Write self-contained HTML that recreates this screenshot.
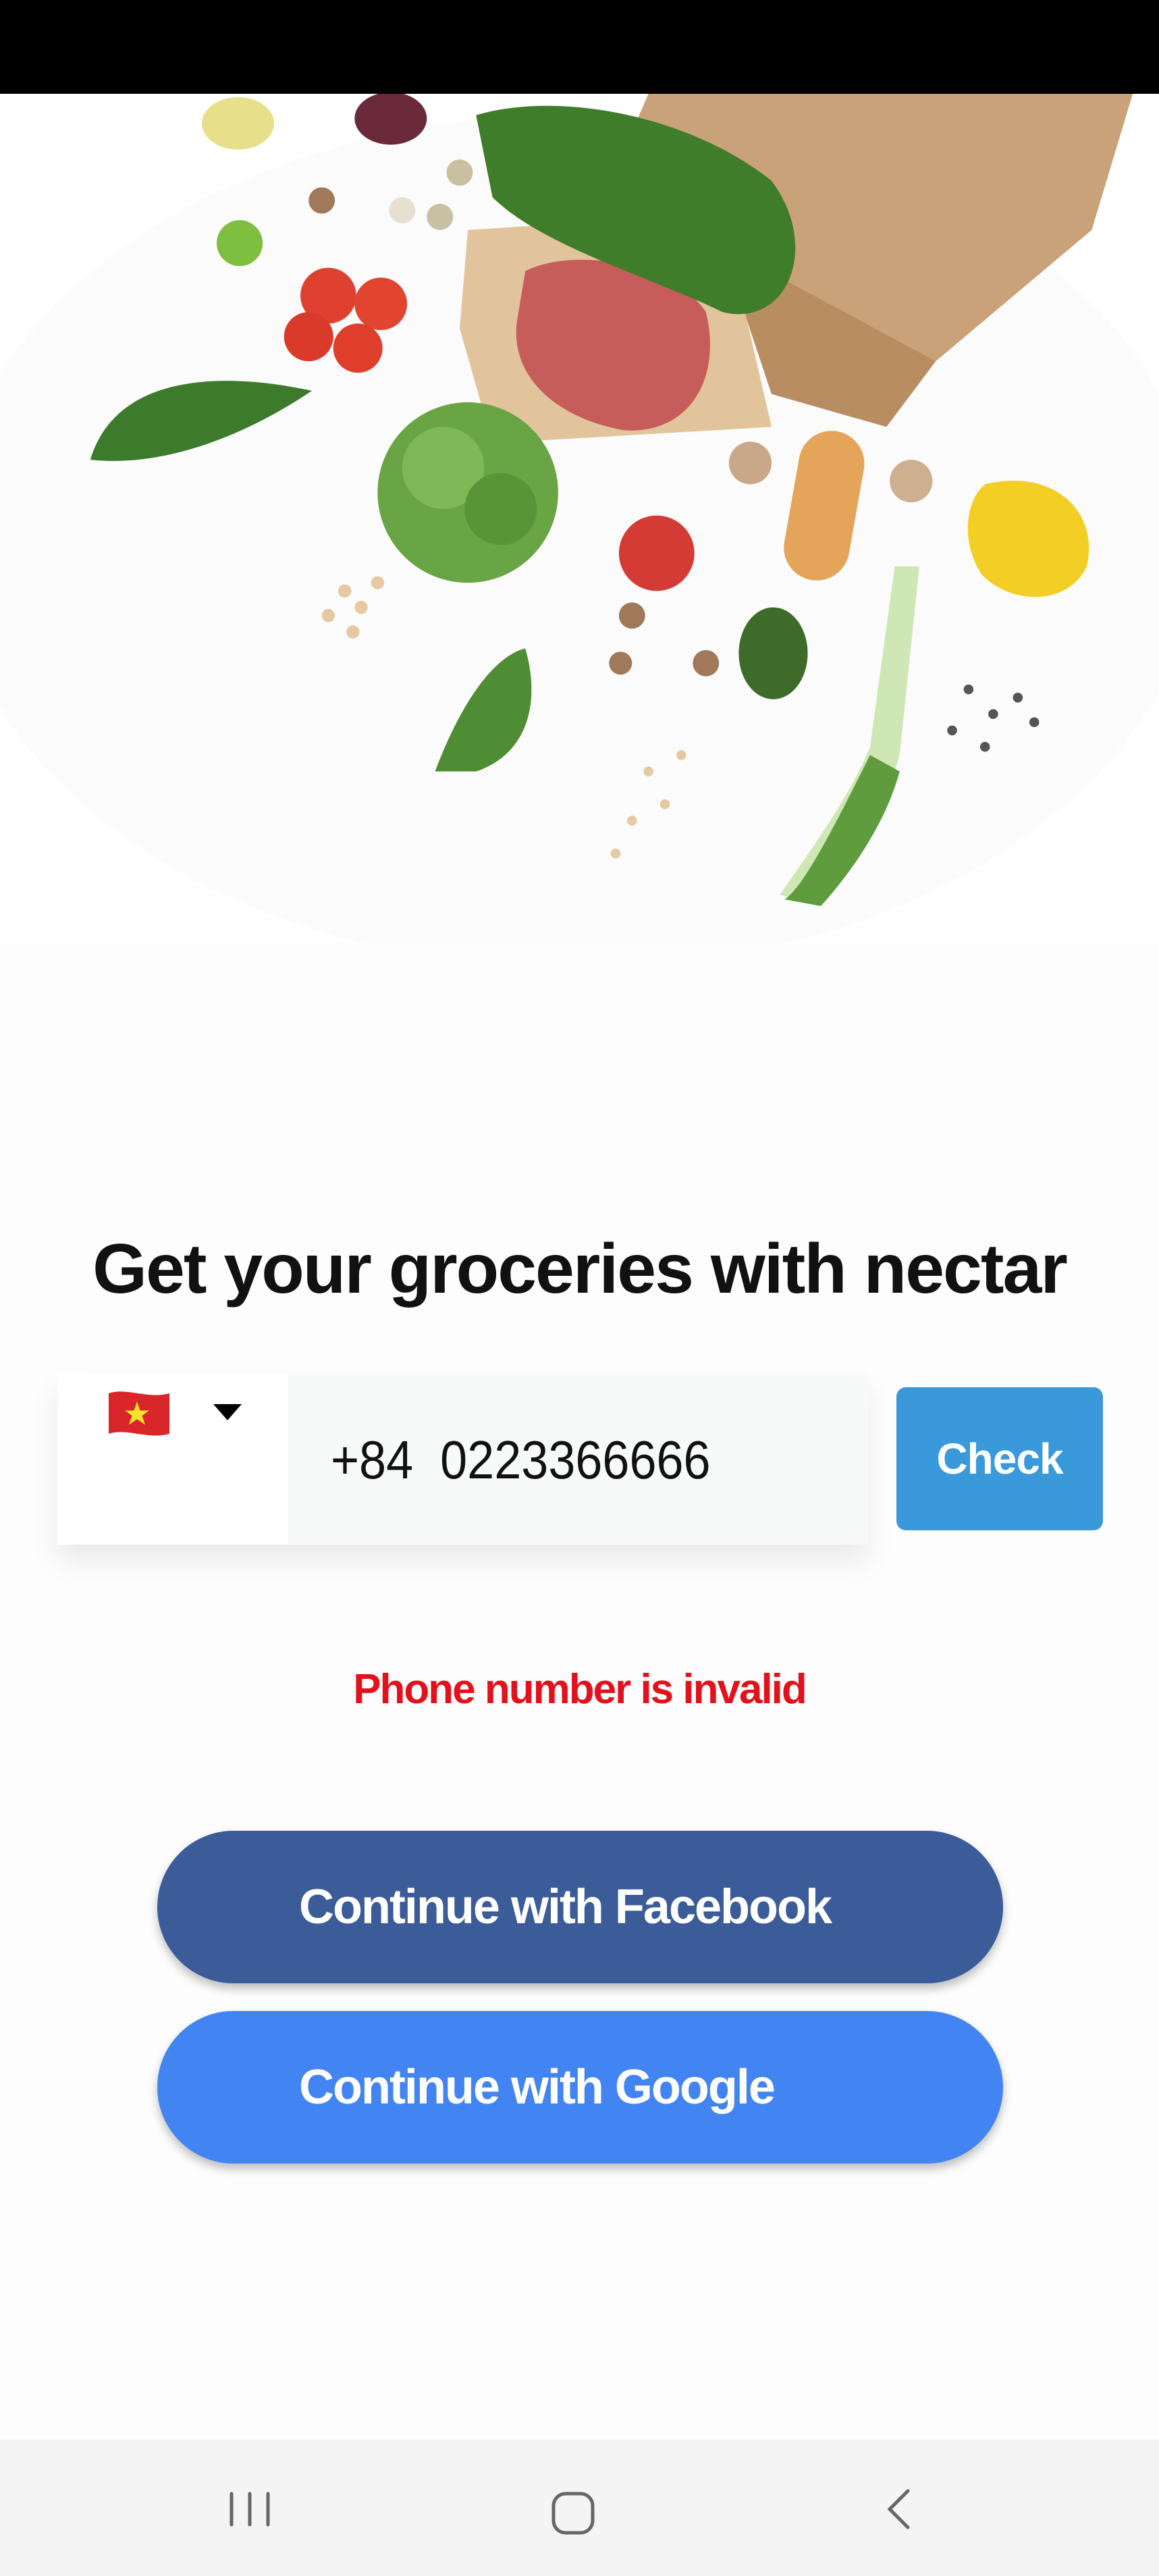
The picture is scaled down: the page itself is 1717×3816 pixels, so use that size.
<!DOCTYPE html>
<html><head><meta charset="utf-8"><style>
*{margin:0;padding:0;box-sizing:border-box}
body{width:1717px;height:3816px;position:relative;background:#fdfdfd;font-family:"Liberation Sans",sans-serif;overflow:hidden}
.abs{position:absolute}
</style></head><body>
<div class="abs" style="left:0;top:0;width:1717px;height:139px;background:#000"></div>
<svg class="abs" style="left:0;top:139px" width="1717" height="1259" viewBox="0 57 706 518" preserveAspectRatio="none">
<rect x="0" y="57" width="706" height="518" fill="#fff"/>
<ellipse cx="350" cy="330" rx="380" ry="260" fill="#fbfbfb"/>
<polygon points="395,57 690,57 665,140 570,220 470,180 385,80" fill="#c9a27a"/>
<polygon points="440,150 570,220 540,260 470,240" fill="#b88d62"/>
<polygon points="285,140 440,130 470,260 300,270 280,200" fill="#e2c49c"/>
<path d="M320,165 C350,150 410,160 430,190 C440,230 420,265 380,262 C340,255 310,230 315,195Z" fill="#c75d5b"/>
<path d="M290,70 C340,55 420,70 470,110 C500,150 480,200 440,190 C400,170 330,150 300,120Z" fill="#3f7d2a"/>
<circle cx="285" cy="300" r="55" fill="#6aa545"/>
<circle cx="270" cy="285" r="25" fill="#7fb957"/><circle cx="305" cy="310" r="22" fill="#5a9438"/>
<path d="M55,280 C70,230 130,225 190,238 C150,265 100,285 55,280Z" fill="#3c7a2c"/>
<circle cx="200" cy="180" r="17" fill="#e0402f"/><circle cx="232" cy="185" r="16" fill="#e2452f"/><circle cx="188" cy="205" r="15" fill="#d93a2a"/><circle cx="218" cy="212" r="15" fill="#df3e2c"/>
<circle cx="146" cy="148" r="14" fill="#7fbf3f"/>
<ellipse cx="145" cy="75" rx="22" ry="16" fill="#e8df8a"/>
<ellipse cx="238" cy="72" rx="22" ry="16" fill="#6a2a3a"/>
<circle cx="400" cy="337" r="23" fill="#d53b35"/>
<rect x="482" y="262" width="40" height="92" rx="20" fill="#e4a55a" transform="rotate(10 502 308)"/>
<path d="M600,295 C640,285 670,310 662,345 C650,370 615,368 598,350 C585,330 588,305 600,295Z" fill="#f3cf25"/>
<ellipse cx="471" cy="398" rx="21" ry="28" fill="#3e6a2a"/>
<path d="M545,345 L560,345 L548,460 C530,520 500,555 475,545 C500,510 520,480 530,455Z" fill="#cfe7b5"/>
<path d="M530,460 C510,500 490,540 478,548 L500,552 C520,530 540,500 548,470Z" fill="#5e9c3e"/>
<path d="M265,470 C280,430 300,400 320,395 C330,430 320,460 290,470Z" fill="#4f8d34"/>
<circle cx="457" cy="282" r="13" fill="#c9a88a"/><circle cx="555" cy="293" r="13" fill="#cdb090"/><circle cx="385" cy="375" r="8" fill="#a0785a"/><circle cx="430" cy="404" r="8" fill="#a0785a"/><circle cx="378" cy="404" r="7" fill="#a0785a"/>
<circle cx="196" cy="122" r="8" fill="#a0785a"/><circle cx="245" cy="128" r="8" fill="#e6e0d0"/><circle cx="268" cy="132" r="8" fill="#c8c0a0"/><circle cx="280" cy="105" r="8" fill="#c8c0a0"/>
<g fill="#e5c9a0"><circle cx="210" cy="360" r="4"/><circle cx="220" cy="370" r="4"/><circle cx="200" cy="375" r="4"/><circle cx="230" cy="355" r="4"/><circle cx="215" cy="385" r="4"/><circle cx="395" cy="470" r="3"/><circle cx="405" cy="490" r="3"/><circle cx="385" cy="500" r="3"/><circle cx="415" cy="460" r="3"/><circle cx="375" cy="520" r="3"/></g>
<g fill="#555"><circle cx="590" cy="420" r="3"/><circle cx="605" cy="435" r="3"/><circle cx="620" cy="425" r="3"/><circle cx="580" cy="445" r="3"/><circle cx="600" cy="455" r="3"/><circle cx="630" cy="440" r="3"/></g>
</svg>
<div class="abs" style="left:0;top:1815px;width:1717px;text-align:center;font-size:104px;font-weight:bold;letter-spacing:-2px;color:#111;line-height:130px">Get your groceries with nectar</div>
<div class="abs" style="left:85px;top:2033px;width:1201px;height:255px;background:#f8f9f9;box-shadow:0 25px 40px rgba(0,0,0,0.08)"></div>
<div class="abs" style="left:85px;top:2033px;width:341px;height:255px;background:#fff"></div>
<svg class="abs" style="left:158px;top:2055px" width="96" height="75" viewBox="0 0 32 25"><path d="M1,3 C10,0 20,6 31,3 L31,23 C20,26 10,20 1,23Z" fill="#d8262b"/><polygon points="15,7 16.5,11.5 21,11.5 17.5,14 19,18.5 15,15.8 11,18.5 12.5,14 9,11.5 13.5,11.5" fill="#f7e12a"/></svg>
<div class="abs" style="left:316px;top:2080px;width:0;height:0;border-left:21px solid transparent;border-right:21px solid transparent;border-top:24px solid #000"></div>
<div class="abs" style="left:490px;top:2108px;font-size:80px;color:#111;line-height:110px;white-space:pre;transform:scaleX(0.9);transform-origin:left">+84  0223366666</div>
<div class="abs" style="left:1328px;top:2055px;width:306px;height:212px;background:#3a99db;border-radius:14px;color:#fff;font-size:64px;font-weight:bold;letter-spacing:-1px;text-align:center;line-height:212px">Check</div>
<div class="abs" style="left:0;top:2463px;width:1717px;text-align:center;color:#e3111b;font-size:62px;font-weight:bold;letter-spacing:-2px;line-height:80px">Phone number is invalid</div>
<div class="abs" style="left:233px;top:2712px;width:1253px;height:226px;background:#3b5b99;border-radius:113px;box-shadow:0 8px 14px rgba(0,0,0,0.25);color:#fff;font-size:72px;font-weight:bold;letter-spacing:-2px;line-height:226px;padding-left:210px">Continue with Facebook</div>
<div class="abs" style="left:233px;top:2979px;width:1253px;height:226px;background:#4285f2;border-radius:113px;box-shadow:0 8px 14px rgba(0,0,0,0.25);color:#fff;font-size:72px;font-weight:bold;letter-spacing:-2px;line-height:226px;padding-left:210px">Continue with Google</div>
<div class="abs" style="left:0;top:3614px;width:1717px;height:202px;background:#f4f4f4"></div>
<svg class="abs" style="left:0;top:3614px" width="1717" height="202">
<g stroke="#666" stroke-width="5" fill="none" stroke-linecap="round">
<line x1="343" y1="80" x2="343" y2="126"/><line x1="370" y1="80" x2="370" y2="126"/><line x1="397" y1="80" x2="397" y2="126"/>
<rect x="820" y="80" width="58" height="58" rx="18"/>
<polyline points="1345,76 1318,103 1345,130"/>
</g></svg>
</body></html>
